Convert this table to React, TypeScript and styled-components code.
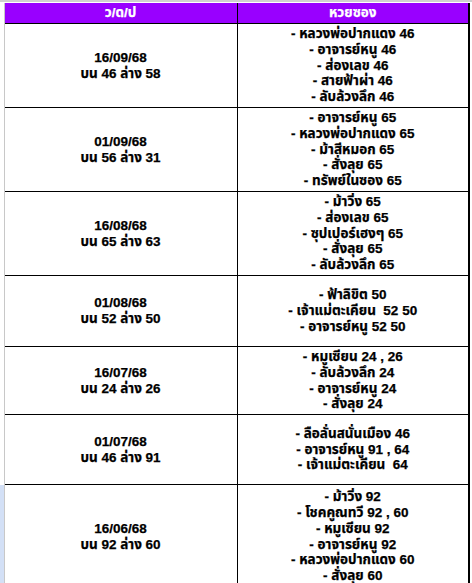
import { createGlobalStyle, styled } from "styled-components"

const GlobalStyle = createGlobalStyle`
  html, body {
    margin: 0;
    padding: 0;
    background: #ffffff;
  }
  body {
    font-family: "Liberation Sans", "Noto Sans Thai", Arial, sans-serif;
  }
`

const Sheet = styled.div`
  width: 472px;
  height: 583px;
  overflow: hidden;
  border-top: 2px solid #d0d0d0;
  background: #ffffff;
`

const Table = styled.table`
  border-collapse: collapse;
  table-layout: fixed;
  width: 469px;
  margin-top: 1px;
  font-family: "Liberation Sans", "Noto Sans Thai", Arial, sans-serif;
  font-size: 13.5px;
  font-weight: bold;
  color: #000000;
  -webkit-text-stroke: 0.25px currentColor;
`

const Gutter = styled.td<{ $selected?: boolean }>`
  width: 3px;
  padding: 0;
  border-right: 1px solid #c8c8c8;
  background: ${(p) => (p.$selected ? "#d3e0f6" : "#ffffff")};
`

const HeadCell = styled.th<{ $last?: boolean }>`
  height: 20px;
  padding: 0;
  background: #9900ff;
  color: #ffffff;
  font-size: 13.5px;
  text-align: center;
  vertical-align: middle;
  border-bottom: 1px solid #000000;
  border-right: ${(p) => (p.$last ? "2px solid #000000" : "1px solid #000000")};
`

const Row = styled.tr<{ $h: number }>`
  height: ${(p) => p.$h}px;
`

const Cell = styled.td<{ $last?: boolean }>`
  padding: 0;
  text-align: center;
  vertical-align: middle;
  line-height: 15.7px;
  border-bottom: 1px solid #000000;
  border-right: ${(p) => (p.$last ? "2px solid #000000" : "1px solid #000000")};
`

const Line = styled.div`
  white-space: pre;
`

type Draw = {
  date: string
  result: string
  tips: string[]
  height: number
}

const draws: Draw[] = [
  {
    date: "16/09/68",
    result: "บน 46 ล่าง 58",
    tips: ["หลวงพ่อปากแดง 46", "อาจารย์หนู 46", "ส่องเลข 46", "สายฟ้าผ่า 46", "ลับล้วงลึก 46"],
    height: 84,
  },
  {
    date: "01/09/68",
    result: "บน 56 ล่าง 31",
    tips: ["อาจารย์หนู 65", "หลวงพ่อปากแดง 65", "ม้าสีหมอก 65", "สั่งลุย 65", "ทรัพย์ในซอง 65"],
    height: 84,
  },
  {
    date: "16/08/68",
    result: "บน 65 ล่าง 63",
    tips: ["ม้าวิ่ง 65", "ส่องเลข 65", "ซุปเปอร์เฮงๆ 65", "สั่งลุย 65", "ลับล้วงลึก 65"],
    height: 84,
  },
  {
    date: "01/08/68",
    result: "บน 52 ล่าง 50",
    tips: ["ฟ้าลิขิต 50", "เจ้าแม่ตะเคียน  52 50", "อาจารย์หนู 52 50"],
    height: 71,
  },
  {
    date: "16/07/68",
    result: "บน 24 ล่าง 26",
    tips: ["หมูเซียน 24 , 26", "ลับล้วงลึก 24", "อาจารย์หนู 24", "สั่งลุย 24"],
    height: 68,
  },
  {
    date: "01/07/68",
    result: "บน 46 ล่าง 91",
    tips: ["ลือลั่นสนั่นเมือง 46", "อาจารย์หนู 91 , 64", "เจ้าแม่ตะเคียน  64"],
    height: 70,
  },
  {
    date: "16/06/68",
    result: "บน 92 ล่าง 60",
    tips: ["ม้าวิ่ง 92", "โชคคูณทวี 92 , 60", "หมูเซียน 92", "อาจารย์หนู 92", "หลวงพ่อปากแดง 60", "สั่งลุย 60"],
    height: 104,
  },
]

export default function App() {
  return (
    <>
      <GlobalStyle />
      <Sheet>
        <Table>
          <colgroup>
            <col style={{ width: 4 }} />
            <col style={{ width: 233 }} />
            <col style={{ width: 232 }} />
          </colgroup>
          <thead>
            <tr>
              <Gutter />
              <HeadCell>ว/ด/ป</HeadCell>
              <HeadCell $last>หวยซอง</HeadCell>
            </tr>
          </thead>
          <tbody>
            {draws.map((d, i) => (
              <Row key={d.date} $h={d.height}>
                <Gutter $selected={i === draws.length - 1} />
                <Cell>
                  <Line>{d.date}</Line>
                  <Line>{d.result}</Line>
                </Cell>
                <Cell $last>
                  {d.tips.map((t) => (
                    <Line key={t}>- {t}</Line>
                  ))}
                </Cell>
              </Row>
            ))}
          </tbody>
        </Table>
      </Sheet>
    </>
  )
}
